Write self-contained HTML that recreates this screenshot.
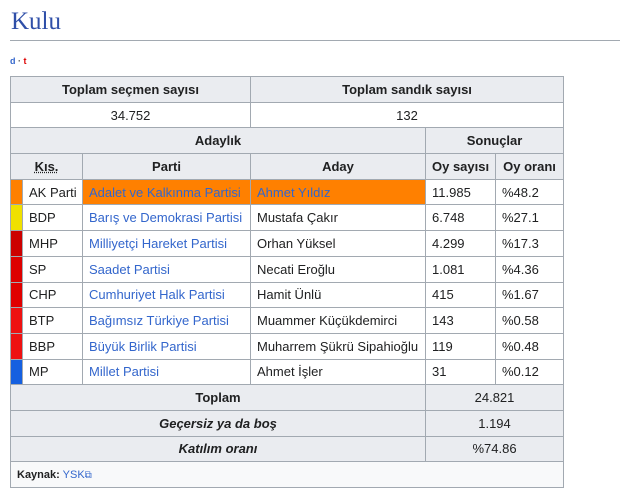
<!DOCTYPE html>
<html><head><meta charset="utf-8"><style>
body{margin:0;background:#fff;font-family:"Liberation Sans",Arial,sans-serif;color:#202122;width:620px;height:500px;overflow:hidden;position:relative}
h1{position:absolute;left:11px;top:8px;margin:0;font-family:"Liberation Serif",serif;font-weight:normal;font-size:25px;color:#2f4fa8}
.line{position:absolute;left:10px;right:0;top:40px;height:1px;background:#a2a9b1}
.dt{position:absolute;left:10px;top:56px;font-size:9px;font-weight:bold}
table{position:absolute;left:10px;top:76px;border-collapse:collapse;table-layout:fixed;width:553px;font-size:13px;background:#f8f9fa}
td,th{border:1px solid #a2a9b1;padding:0 6px;height:24.7px;white-space:nowrap;overflow:hidden}
th{background:#eaecf0;font-weight:bold;text-align:center}
td{background:#fff}
td.c{text-align:center}
a{color:#3366cc;text-decoration:none}
.o{background:#ff8000}
.ft td{background:#f8f9fa;font-size:11px}
.sum th{background:#eaecf0}
.sum td{background:#eaecf0;text-align:center;font-weight:normal}
.k{text-decoration:underline dotted}
</style></head><body>
<h1>Kulu</h1><div class="line"></div>
<div class="dt"><span style="color:#3366cc">d</span> <span style="color:#555">·</span> <span style="color:#d00">t</span></div>
<table>
<colgroup><col style="width:12px"><col style="width:60px"><col style="width:168px"><col style="width:175px"><col style="width:70px"><col style="width:68px"></colgroup>
<tr><th colspan="3">Toplam seçmen sayısı</th><th colspan="3">Toplam sandık sayısı</th></tr>
<tr><td colspan="3" class="c">34.752</td><td colspan="3" class="c">132</td></tr>
<tr><th colspan="4">Adaylık</th><th colspan="2">Sonuçlar</th></tr>
<tr><th colspan="2"><span class="k">Kıs.</span></th><th>Parti</th><th>Aday</th><th>Oy sayısı</th><th>Oy oranı</th></tr>
<tr><td style="background:#ff8000;padding:0"></td><td>AK Parti</td><td class="o"><a>Adalet ve Kalkınma Partisi</a></td><td class="o"><a>Ahmet Yıldız</a></td><td>11.985</td><td>%48.2</td></tr>
<tr><td style="background:#f0e000;padding:0"></td><td>BDP</td><td><a>Barış ve Demokrasi Partisi</a></td><td>Mustafa Çakır</td><td>6.748</td><td>%27.1</td></tr>
<tr><td style="background:#cc0000;padding:0"></td><td>MHP</td><td><a>Milliyetçi Hareket Partisi</a></td><td>Orhan Yüksel</td><td>4.299</td><td>%17.3</td></tr>
<tr><td style="background:#dd0000;padding:0"></td><td>SP</td><td><a>Saadet Partisi</a></td><td>Necati Eroğlu</td><td>1.081</td><td>%4.36</td></tr>
<tr><td style="background:#e00000;padding:0"></td><td>CHP</td><td><a>Cumhuriyet Halk Partisi</a></td><td>Hamit Ünlü</td><td>415</td><td>%1.67</td></tr>
<tr><td style="background:#ee1111;padding:0"></td><td>BTP</td><td><a>Bağımsız Türkiye Partisi</a></td><td>Muammer Küçükdemirci</td><td>143</td><td>%0.58</td></tr>
<tr><td style="background:#ee1111;padding:0"></td><td>BBP</td><td><a>Büyük Birlik Partisi</a></td><td>Muharrem Şükrü Sipahioğlu</td><td>119</td><td>%0.48</td></tr>
<tr><td style="background:#1560e0;padding:0"></td><td>MP</td><td><a>Millet Partisi</a></td><td>Ahmet İşler</td><td>31</td><td>%0.12</td></tr>
<tr class="sum"><th colspan="4">Toplam</th><td colspan="2">24.821</td></tr>
<tr class="sum"><th colspan="4"><i>Geçersiz ya da boş</i></th><td colspan="2">1.194</td></tr>
<tr class="sum"><th colspan="4"><i>Katılım oranı</i></th><td colspan="2">%74.86</td></tr>
<tr class="ft"><td colspan="6"><b>Kaynak:</b> <a>YSK</a><span style="color:#3366cc;font-size:10px">⧉</span></td></tr>
</table>
</body></html>
